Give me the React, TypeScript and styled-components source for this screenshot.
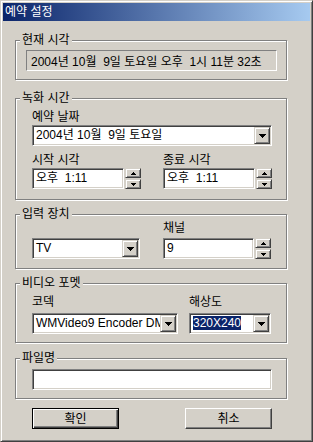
import styled, { createGlobalStyle } from "styled-components";

const GlobalStyle = createGlobalStyle`
  html, body {
    margin: 0;
    padding: 0;
    background: #d4d0c8;
  }
  body {
    font-family: "Liberation Sans", "Noto Sans CJK KR", sans-serif;
    font-size: 12px;
    color: #000;
  }
`;

const Window = styled.div`
  box-sizing: border-box;
  width: 313px;
  height: 442px;
  background: #d4d0c8;
  border: 1px solid;
  border-color: #d4d0c8 #404040 #404040 #d4d0c8;
  box-shadow: inset 1px 1px #fff, inset -1px -1px #808080;
  padding: 2px;
  display: flex;
  flex-direction: column;
`;

const TitleBar = styled.div`
  height: 18px;
  flex-shrink: 0;
  display: flex;
  align-items: center;
  padding-left: 2px;
  color: #fff;
  line-height: 18px;
  background: linear-gradient(to right, #0a246a, #a6caf0);
`;

const Body = styled.div`
  padding: 19px 0 0 12px;
  display: flex;
  flex-direction: column;
`;

const Group = styled.div<{ $mt: number; $h: number }>`
  box-sizing: border-box;
  width: 272px;
  height: ${(p) => p.$h}px;
  margin-top: ${(p) => p.$mt}px;
  border: 1px solid #808080;
  box-shadow: inset 1px 1px #fff, 1px 1px #fff;
  display: flex;
  flex-direction: column;
`;

const Legend = styled.div`
  align-self: flex-start;
  margin: -8px 0 -6px 4px;
  padding: 0 2px;
  height: 14px;
  line-height: 14px;
  background: #d4d0c8;
  white-space: pre;
`;

const GroupBody = styled.div<{ $pad: string }>`
  padding: ${(p) => p.$pad};
  display: flex;
  flex-direction: column;
  align-items: flex-start;
`;

const Label = styled.div<{ $mb?: number; $mt?: number }>`
  height: 14px;
  line-height: 14px;
  margin-top: ${(p) => p.$mt ?? 0}px;
  margin-bottom: ${(p) => p.$mb ?? 1}px;
  white-space: pre;
`;

const Columns = styled.div<{ $first: number; $mt?: number }>`
  display: grid;
  grid-template-columns: ${(p) => p.$first}px auto;
  margin-top: ${(p) => p.$mt ?? 0}px;
`;

const Column = styled.div`
  display: flex;
  flex-direction: column;
  justify-content: flex-end;
  align-items: flex-start;
`;

const StaticField = styled.div`
  box-sizing: border-box;
  width: 251px;
  height: 21px;
  border: 1px solid;
  border-color: #808080 #fff #fff #808080;
  padding-left: 4px;
  display: flex;
  align-items: center;
  white-space: pre;
`;

const Sunken = styled.div<{ $w: number }>`
  box-sizing: border-box;
  width: ${(p) => p.$w}px;
  height: 21px;
  background: #fff;
  border: 1px solid;
  border-color: #808080 #fff #fff #808080;
  box-shadow: inset 1px 1px #404040, inset -1px -1px #d4d0c8;
  padding: 1px;
  display: flex;
  align-items: center;
`;

const FieldText = styled.span`
  flex: 1;
  min-width: 0;
  overflow: hidden;
  white-space: pre;
  padding-left: 2px;
  line-height: 17px;
`;

const Selected = styled.span`
  background: #0a246a;
  color: #fff;
`;

const RaisedBox = styled.div`
  box-sizing: border-box;
  background: #d4d0c8;
  border: 1px solid;
  border-color: #d4d0c8 #404040 #404040 #d4d0c8;
  box-shadow: inset 1px 1px #fff, inset -1px -1px #808080;
  display: flex;
  align-items: center;
  justify-content: center;
`;

const DropButton = styled(RaisedBox)`
  width: 16px;
  height: 17px;
  flex-shrink: 0;
`;

const SpinRow = styled.div`
  display: flex;
  gap: 1px;
`;

const Spinner = styled.div`
  display: flex;
  flex-direction: column;
  gap: 1px;
`;

const SpinButton = styled(RaisedBox)`
  width: 16px;
  height: 10px;
`;

const ButtonRow = styled.div`
  display: flex;
  gap: 66px;
  margin: 9px 0 0 17px;
`;

const PushButton = styled.div<{ $default?: boolean }>`
  box-sizing: border-box;
  width: 87px;
  height: 21px;
  display: flex;
  align-items: center;
  justify-content: center;
  background: #d4d0c8;
  border: 1px solid;
  border-color: ${(p) =>
    p.$default ? "#000" : "#fff #404040 #404040 #fff"};
  box-shadow: ${(p) =>
    p.$default
      ? "inset 1px 1px #fff, inset -1px -1px #404040, inset -2px -2px #808080"
      : "inset -1px -1px #808080"};
  line-height: 14px;
`;

const DownArrow = () => (
  <svg width="7" height="4" viewBox="0 0 7 4" shapeRendering="crispEdges">
    <path d="M0 0h7v1H0zM1 1h5v1H1zM2 2h3v1H2zM3 3h1v1H3z" fill="#000" />
  </svg>
);

const SmallArrow = ({ up }: { up?: boolean }) => (
  <svg width="5" height="3" viewBox="0 0 5 3" shapeRendering="crispEdges">
    <path
      d={up ? "M2 0h1v1H2zM1 1h3v1H1zM0 2h5v1H0z" : "M0 0h5v1H0zM1 1h3v1H1zM2 2h1v1H2z"}
      fill="#000"
    />
  </svg>
);

const Combo = ({ w, children }: { w: number; children: React.ReactNode }) => (
  <Sunken $w={w}>
    <FieldText>{children}</FieldText>
    <DropButton>
      <DownArrow />
    </DropButton>
  </Sunken>
);

const SpinEdit = ({ w, value }: { w: number; value: string }) => (
  <SpinRow>
    <Sunken $w={w}>
      <FieldText>{value}</FieldText>
    </Sunken>
    <Spinner>
      <SpinButton>
        <SmallArrow up />
      </SpinButton>
      <SpinButton>
        <SmallArrow />
      </SpinButton>
    </Spinner>
  </SpinRow>
);

export default function App() {
  return (
    <>
      <GlobalStyle />
      <Window>
        <TitleBar>예약 설정</TitleBar>
        <Body>
          <Group $mt={0} $h={40}>
            <Legend>현재 시각</Legend>
            <GroupBody $pad="9px 0 0 10px">
              <StaticField>2004년 10월  9일 토요일 오후  1시 11분 32초</StaticField>
            </GroupBody>
          </Group>

          <Group $mt={18} $h={102}>
            <Legend>녹화 시간</Legend>
            <GroupBody $pad="11px 0 0 16px">
              <Label>예약 날짜</Label>
              <Combo w={240}>2004년 10월  9일 토요일</Combo>
              <Columns $first={131} $mt={7}>
                <Column>
                  <Label>시작 시각</Label>
                  <SpinEdit w={92} value="오후  1:11" />
                </Column>
                <Column>
                  <Label>종료 시각</Label>
                  <SpinEdit w={92} value="오후  1:11" />
                </Column>
              </Columns>
            </GroupBody>
          </Group>

          <Group $mt={14} $h={55}>
            <Legend>입력 장치</Legend>
            <GroupBody $pad="6px 0 0 16px">
              <Columns $first={131}>
                <Column>
                  <Combo w={108}>TV</Combo>
                </Column>
                <Column>
                  <Label $mb={3}>채널</Label>
                  <SpinEdit w={91} value="9" />
                </Column>
              </Columns>
            </GroupBody>
          </Group>

          <Group $mt={14} $h={60}>
            <Legend>비디오 포멧</Legend>
            <GroupBody $pad="11px 0 0 16px">
              <Columns $first={157}>
                <Column>
                  <Label $mb={4}>코덱</Label>
                  <Combo w={146}>WMVideo9 Encoder DMO</Combo>
                </Column>
                <Column>
                  <Label $mb={4}>해상도</Label>
                  <Combo w={82}>
                    <Selected>320X240</Selected>
                  </Combo>
                </Column>
              </Columns>
            </GroupBody>
          </Group>

          <Group $mt={15} $h={41}>
            <Legend>파일명</Legend>
            <GroupBody $pad="10px 0 0 16px">
              <Sunken $w={240} />
            </GroupBody>
          </Group>

          <ButtonRow>
            <PushButton $default>확인</PushButton>
            <PushButton>취소</PushButton>
          </ButtonRow>
        </Body>
      </Window>
    </>
  );
}
